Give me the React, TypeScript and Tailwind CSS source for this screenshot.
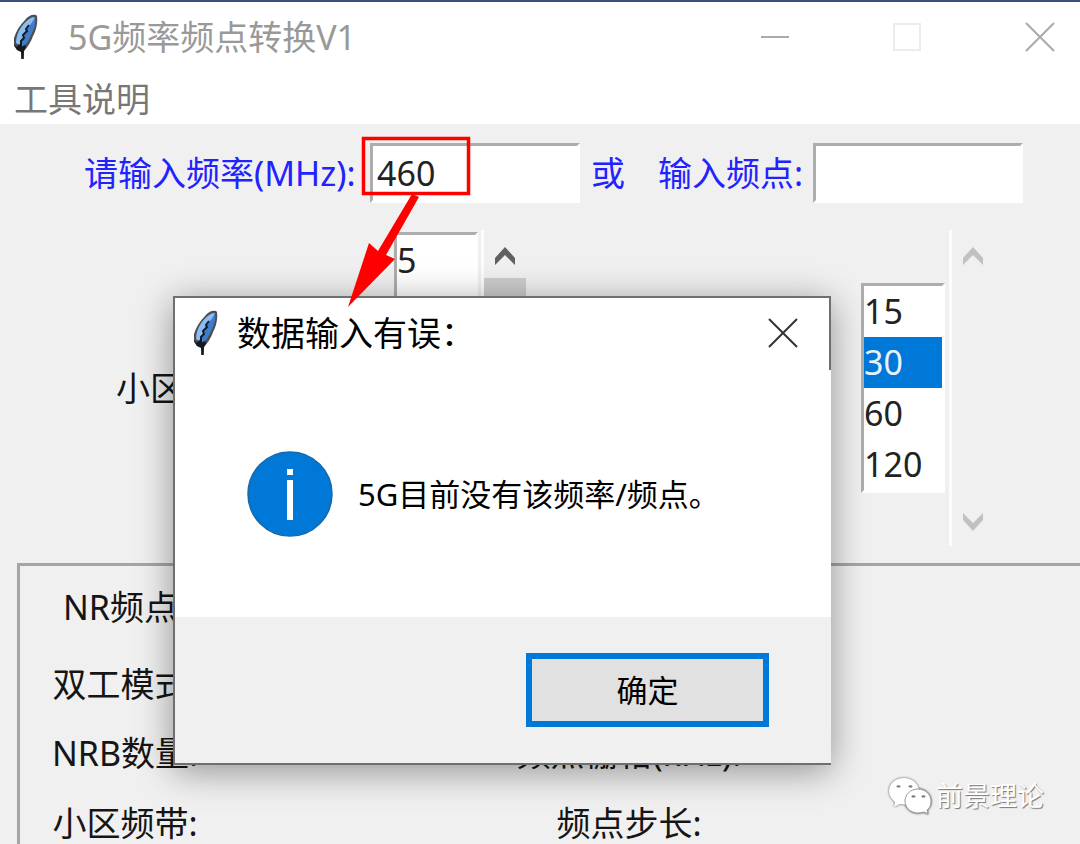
import { useState } from "react";
import clsx from "clsx";

const fields = [
  ["NR频点:", "h-[82px]", ""],
  ["双工模式:", "h-[72px]", ""],
  ["NRB数量:", "h-[66px]", "频点栅格(kHz):"],
  ["小区频带:", "h-[74px]", "频点步长:"],
];

function Feather() {
  return (
    <svg viewBox="0 0 26 46" className="h-[46px] w-[26px] shrink-0" aria-hidden="true">
      <path
        d="M23 1C19 0 15 2 12 6C7 11 3 17 1 24L1 32L4 36L8 37L8 45L11 45L11 37C14 34 18 28 20 22C23 17 25 9 24 2Z"
        fill="#4b4f54"
      />
      <path d="M22 3C17 3 12 8 9 12C5 17 3 23 3 29L6 31L11 22L20 9Z" fill="#8cbdf0" />
      <path d="M22 3L20 7L14 15L9 28L9 33C13 31 16 26 18 21C21 16 23 9 22 3Z" fill="#3f7ccb" />
      <path d="M16 11L13 15L14 17L10 21L11 24L8 27L8 33" fill="none" stroke="#101c2b" strokeWidth="2" />
      <path d="M1 30L4 33L6 30L8 33L12 31L13 33L11 37L10 45L9 45L8 38L4 36Z" fill="#16191c" />
    </svg>
  );
}

function CloseIcon() {
  return (
    <svg viewBox="0 0 30 30" className="size-[30px]" fill="none" stroke="currentColor" strokeWidth="2">
      <path d="M1 1L29 29M29 1L1 29" />
    </svg>
  );
}

function Chevron({ down }: { down?: boolean }) {
  return (
    <svg viewBox="0 0 20 18" className={clsx("h-[18px] w-5", down && "rotate-180")} fill="currentColor">
      <path d="M10 0L20 11V18L10 8L0 18V11Z" />
    </svg>
  );
}

function ListBox({ id, label, items, value }: { id: string; label: string; items: string[]; value?: string }) {
  return (
    <select
      id={id}
      aria-label={label}
      size={items.length}
      defaultValue={value}
      className="w-[84px] appearance-none overflow-hidden border-3 border-t-[#adadad] border-r-white border-b-white border-l-[#adadad] bg-white p-0 outline-none"
    >
      {items.map((item) => (
        <option
          key={item}
          className="block h-[51px] min-h-0 px-0 pt-[2px] pb-0 text-[34px] text-[#222] checked:bg-[#0078d7] checked:bg-linear-to-r checked:from-[#0078d7] checked:to-[#0078d7] checked:text-[#e8f2fb]"
        >
          {item}
        </option>
      ))}
    </select>
  );
}

function ScrollBar({ active }: { active?: boolean }) {
  return (
    <div
      className={clsx(
        "flex h-full w-[45px] flex-col items-center border-l-3 border-[#fcfcfc]",
        active ? "text-[#606060]" : "text-[#c1c1c1]",
      )}
    >
      <button type="button" aria-label="向上滚动" className="flex h-12 w-full shrink-0 items-center justify-center pt-1">
        <Chevron />
      </button>
      <div className={clsx("w-full grow", active && "bg-[#cdcdcd]")} />
      <button type="button" aria-label="向下滚动" className="flex h-12 w-full shrink-0 items-center justify-center">
        <Chevron down />
      </button>
    </div>
  );
}

function MessageBox() {
  return (
    <div
      role="dialog"
      aria-labelledby="msg-title"
      className="absolute top-[296px] left-[173px] w-[658px] border-t-2 border-b-2 border-l-2 border-[#6f6f6f] bg-white text-black shadow-[0_6px_34px_rgba(0,0,0,0.4)]"
    >
      <header className="flex h-[72px] items-center border-r-2 border-[#6f6f6f] pr-[31px] pb-[2px] pl-[18px]">
        <Feather />
        <h2 id="msg-title" className="ml-[18px] grow text-[34px] leading-[48px]">
          数据输入有误：
        </h2>
        <button type="button" aria-label="关闭" className="text-[#333]">
          <CloseIcon />
        </button>
      </header>
      <div className="flex h-[247px] items-center pl-[72px]">
        <svg viewBox="0 0 86 86" className="size-[86px] shrink-0" aria-hidden="true">
          <circle cx="43" cy="43" r="42" fill="#0078d7" stroke="#1668a8" strokeWidth="1.5" />
          <path d="M40 18H46V24H40ZM40 29H46V69H40Z" fill="#fff" />
        </svg>
        <p className="ml-[25px] text-[31px] leading-[44px] whitespace-nowrap">5G目前没有该频率/频点。</p>
      </div>
      <footer className="flex h-[146px] items-center justify-end bg-[#f0f0f0] pr-[62px]">
        <button
          type="button"
          className="h-[74px] w-[243px] border-[6px] border-[#0078d7] bg-[#e1e1e1] text-[31px] leading-[44px]"
        >
          确定
        </button>
      </footer>
    </div>
  );
}

function Annotation() {
  return (
    <svg viewBox="0 0 130 174" className="pointer-events-none absolute top-[136px] left-[345px] h-[174px] w-[130px]" aria-hidden="true">
      <rect x="18.5" y="2.5" width="105" height="55" fill="none" stroke="#f00" strokeWidth="3.5" />
      <path d="M67 58L74 61L41 119L50 123L3 171L24 107L33 115Z" fill="#f00" />
    </svg>
  );
}

function Watermark() {
  return (
    <div className="absolute right-[36px] bottom-[29px] flex items-center gap-1">
      <svg viewBox="0 0 44 38" className="h-[38px] w-11 drop-shadow-[0_0_1px_rgba(0,0,0,0.7)]" aria-hidden="true">
        <path d="M16 1C7 1 1 7 1 14C1 18 3 22 7 25L6 30L12 27C21 29 32 24 31 13C30 6 24 1 16 1Z" fill="#fff" />
        <path
          d="M30 12C22 12 17 18 17 24C17 31 23 36 30 36C33 36 35 35 36 35L40 37L39 33C42 31 43 28 43 24C43 17 37 12 30 12Z"
          fill="#fff"
          stroke="#999"
        />
        <path d="M9 10A2 2 0 0 1 12 10M21 10A2 2 0 0 1 24 10M24 20A2 2 0 0 1 27 20M34 20A2 2 0 0 1 37 20" fill="none" stroke="#777" strokeWidth="2" />
      </svg>
      <span className="text-[27px] leading-9 text-white [text-shadow:1px_1px_1px_#777]">前景理论</span>
    </div>
  );
}

export default function App() {
  const [freq, setFreq] = useState("460");
  const [point, setPoint] = useState("");

  const inputClass =
    "h-[60px] w-[210px] border-3 border-t-[#adadad] border-r-white border-b-white border-l-[#adadad] bg-white pl-1 text-[34px] text-[#222] outline-none";

  return (
    <main className="relative flex h-screen flex-col overflow-hidden bg-[#f0f0f0] font-['Noto_Sans','Noto_Sans_CJK_SC',sans-serif] text-[34px] leading-[48px] text-[#151515]">
      {/* Title bar */}
      <header className="flex h-[74px] shrink-0 items-center border-t-2 border-[#3c5080] bg-white pr-[25px] pb-[2px] pl-[13px] text-[#999]">
        <Feather />
        <h1 className="ml-[29px] grow">5G频率频点转换V1</h1>
        <div className="flex items-center gap-[104px]">
          <button type="button" aria-label="最小化" className="h-[2px] w-7 bg-[#aaa]" />
          <button type="button" aria-label="最大化" className="size-7 border-2 border-[#ececec]" />
          <button type="button" aria-label="关闭" className="text-[#aaa]">
            <CloseIcon />
          </button>
        </div>
      </header>

      {/* Menu */}
      <nav className="flex h-[50px] shrink-0 items-center bg-white pl-[14px] text-[#777]">
        <button type="button">工具说明</button>
      </nav>

      {/* Frequency inputs */}
      <div className="flex h-[97px] shrink-0 items-center pl-[84px] text-[#2222ff]">
        <label htmlFor="freq" className="w-[286px] whitespace-nowrap">
          请输入频率(MHz):
        </label>
        <input id="freq" value={freq} onChange={(e) => setFreq(e.target.value)} className={inputClass} />
        <span className="w-[78px] pl-[11px]">或</span>
        <label htmlFor="point" className="w-[155px] whitespace-nowrap">
          输入频点:
        </label>
        <input id="point" value={point} onChange={(e) => setPoint(e.target.value)} className={inputClass} />
      </div>

      {/* Bandwidth and subcarrier spacing */}
      <div className="mt-[9px] flex h-[316px] shrink-0 items-center pr-[86px] pl-[116px]">
        <label htmlFor="bandwidth" className="w-[278px]">
          小区带宽(MHz):
        </label>
        <ListBox id="bandwidth" label="小区带宽" items={["5", "10", "15", "20", "25", "30"]} />
        <div className="ml-[3px] h-full">
          <ScrollBar active />
        </div>
        <div className="ml-auto flex h-full items-center gap-1">
          <ListBox id="scs" label="子载波间隔" items={["15", "30", "60", "120"]} value="30" />
          <ScrollBar />
        </div>
      </div>

      {/* Results */}
      <section className="mt-[17px] ml-[17px] shrink-0 border-t-3 border-l-3 border-[#a5a5a5] leading-9">
        {fields.map(([left, height, right]) => (
          <div key={left} className={clsx("flex items-center text-center", height)}>
            <span className="w-[210px]">{left}</span>
            <span className="ml-[269px] w-[260px]">{right}</span>
          </div>
        ))}
      </section>

      <MessageBox />
      <Annotation />
      <Watermark />
    </main>
  );
}
